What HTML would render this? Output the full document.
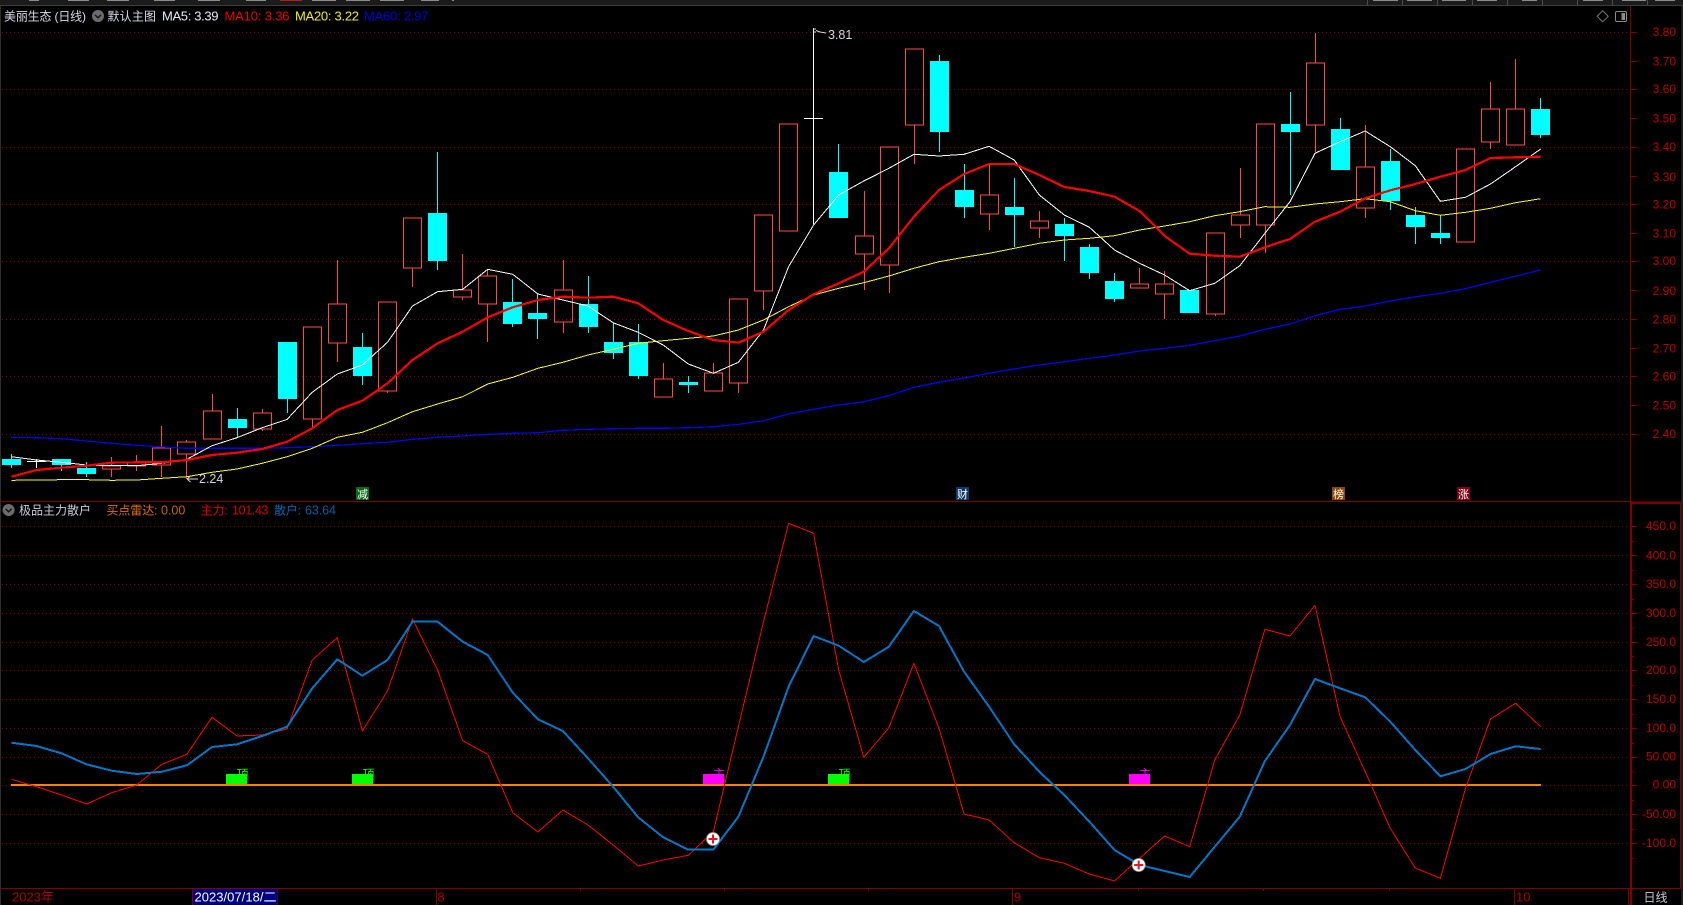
<!DOCTYPE html>
<html lang="zh">
<head>
<meta charset="utf-8">
<title>美丽生态 (日线)</title>
<style>
html,body{margin:0;padding:0;background:#000;width:1683px;height:905px;overflow:hidden}
svg{display:block;position:absolute;left:0;top:0}
text{font-family:"Liberation Sans","Noto Sans CJK SC",sans-serif}
polyline{shape-rendering:crispEdges;stroke-linejoin:round}
</style>
</head>
<body>
<svg width="1683" height="905" viewBox="0 0 1683 905" xmlns="http://www.w3.org/2000/svg">
<rect width="1683" height="905" fill="#000"/>
<!-- top strip -->
<rect x="0" y="0" width="1683" height="5" fill="#1b1b1b"/>
<rect x="0" y="5" width="1683" height="1" fill="#3c3c3c"/>
<g shape-rendering="crispEdges">
<g fill="#8c8c8c">
<rect x="29" y="0" width="10" height="1"/><rect x="68" y="0" width="21" height="1"/><rect x="107" y="0" width="22" height="1"/><rect x="154" y="0" width="21" height="1"/><rect x="198" y="0" width="22" height="1"/><rect x="246" y="0" width="20" height="1"/><rect x="312" y="0" width="24" height="1"/><rect x="346" y="0" width="24" height="1"/><rect x="380" y="0" width="24" height="1"/><rect x="421" y="0" width="18" height="1"/><rect x="452" y="0" width="2" height="1"/>
<rect x="1373" y="0" width="25" height="1"/><rect x="1407" y="0" width="25" height="1"/><rect x="1442" y="0" width="24" height="1"/><rect x="1477" y="0" width="20" height="1"/><rect x="1522" y="0" width="15" height="1"/><rect x="1583" y="0" width="20" height="1"/><rect x="1622" y="0" width="24" height="1"/><rect x="1655" y="0" width="20" height="1"/>
</g>
<rect x="280" y="0" width="22" height="1" fill="#b02020"/>
<g fill="#4a4a4a">
<rect x="1367" y="0" width="1" height="5"/><rect x="1402" y="0" width="1" height="5"/><rect x="1437" y="0" width="1" height="5"/><rect x="1472" y="0" width="1" height="5"/><rect x="1507" y="0" width="1" height="5"/><rect x="1542" y="0" width="1" height="5"/><rect x="1577" y="0" width="1" height="5"/><rect x="1612" y="0" width="1" height="5"/><rect x="1647" y="0" width="1" height="5"/>
</g>
<!-- frame -->
<rect x="0" y="6" width="1" height="899" fill="#2e2e2e"/>
<rect x="1681" y="6" width="2" height="899" fill="#1c1c1c"/>
</g>
<!-- grid lines -->
<g stroke="#8c0000" stroke-width="1" stroke-dasharray="1 3" shape-rendering="crispEdges" fill="none">
<path d="M2 32.5H1628M2 89.5H1628M2 147.5H1628M2 204.5H1628M2 261.5H1628M2 319.5H1628M2 376.5H1628M2 434.5H1628"/>
<path d="M2 526.5H1628M2 555.5H1628M2 584.5H1628M2 613.5H1628M2 642.5H1628M2 670.5H1628M2 699.5H1628M2 728.5H1628M2 757.5H1628M2 785.5H1628M2 814.5H1628M2 843.5H1628"/>
</g>
<!-- axes -->
<g stroke="#800000" fill="none" shape-rendering="crispEdges">
<path d="M1630.5 6V502" stroke-width="1"/>
<path d="M0 501.5H1631" stroke-width="1"/>
<path d="M1631 502.5H1681" stroke-width="2.5"/>
<path d="M1631 502V905" stroke-width="2"/>
<path d="M1680.5 502V888" stroke-width="1"/>
<path d="M1 888.5H1681" stroke-width="1"/>
<path d="M1631 32.5h6M1631 61.5h6M1631 89.5h6M1631 118.5h6M1631 147.5h6M1631 176.5h6M1631 204.5h6M1631 233.5h6M1631 261.5h6M1631 290.5h6M1631 319.5h6M1631 348.5h6M1631 376.5h6M1631 405.5h6M1631 434.5h6"/>
<path d="M1632 526.5h5M1632 555.5h5M1632 584.5h5M1632 613.5h5M1632 642.5h5M1632 670.5h5M1632 699.5h5M1632 728.5h5M1632 757.5h5M1632 785.5h5M1632 814.5h5M1632 843.5h5"/>
<path d="M1632 541.5h2M1632 570.5h2M1632 599.5h2M1632 628.5h2M1632 656.5h2M1632 685.5h2M1632 714.5h2M1632 743.5h2M1632 771.5h2M1632 800.5h2M1632 829.5h2M1632 858.5h2"/>
<path d="M436.5 888V905M1012.5 888V905M1514.5 888V905M1628.5 888V905M192.5 888V905M277.5 888V905"/>
<path d="M580.5 888v3M724.5 888v3M868.5 888v3M1138.5 888v3M1263.5 888v3M1389.5 888v3"/>
</g>
<!-- cyan candles -->
<g shape-rendering="crispEdges">
<path stroke="#00ffff" stroke-width="1" fill="none" d="M11.5 454V468M61.5 459V471M86.5 462V477M237.5 408V438M287.5 342V413M362.5 333V385M437.5 152V270M512.5 279V327M537.5 294V339M588.5 276V333M613.5 323V359M638.5 324V379M688.5 376V393M838.5 144V218M939.5 55V152M964.5 164V218M1014.5 178V247M1064.5 218V261M1089.5 244V279M1114.5 273V302M1290.5 92V195M1340.5 118V170M1390.5 149V210M1415.5 207V244M1440.5 215V244M1540.5 98V138"/>
<path fill="#00ffff" d="M2 459h19v6h-19zM52 459h19v6h-19zM77 468h19v6h-19zM228 419h19v9h-19zM278 342h19v57h-19zM353 347h19v29h-19zM428 213h19v48h-19zM503 302h19v22h-19zM528 313h19v6h-19zM579 304h19v23h-19zM604 342h19v11h-19zM629 342h19v34h-19zM679 382h19v3h-19zM829 172h19v46h-19zM930 61h19v71h-19zM955 190h19v17h-19zM1005 207h19v8h-19zM1055 224h19v12h-19zM1080 247h19v26h-19zM1105 281h19v18h-19zM1180 290h19v23h-19zM1281 124h19v8h-19zM1331 129h19v41h-19zM1381 161h19v40h-19zM1406 215h19v12h-19zM1431 233h19v5h-19zM1531 109h19v26h-19z"/>
<!-- white doji -->
<path stroke="#ffffff" stroke-width="1" fill="none" d="M36.5 459V468M27 461.5H46M813.5 28V224M804 118.5H823"/>
<!-- red candles -->
<path stroke="#ff4848" stroke-width="1" fill="none" d="M111.5 457V466M111.5 469V477M102.5 466h18v3h-18zM136.5 455V462M136.5 466V471M127.5 462h18v4h-18zM161.5 426V448M161.5 465V477M152.5 448h18v17h-18zM186.5 440V442M186.5 454V479M177.5 442h18v12h-18zM212.5 394V411M203.5 411h18v28h-18zM262.5 409V413M262.5 429V431M253.5 413h18v16h-18zM312.5 419V427M303.5 327h18v92h-18zM337.5 260V304M337.5 343V362M328.5 304h18v39h-18zM387.5 391V393M378.5 302h18v89h-18zM412.5 268V287M403.5 218h18v50h-18zM462.5 254V290M462.5 297V300M453.5 290h18v7h-18zM487.5 269V276M487.5 304V342M478.5 276h18v28h-18zM563.5 260V290M563.5 322V333M554.5 290h18v32h-18zM663.5 363V379M654.5 379h18v18h-18zM713.5 363V373M704.5 373h18v18h-18zM738.5 383V393M729.5 299h18v84h-18zM763.5 291V310M754.5 215h18v76h-18zM779.5 124h18v107h-18zM864.5 191V236M864.5 254V290M855.5 236h18v18h-18zM889.5 265V293M880.5 147h18v118h-18zM914.5 125V164M905.5 49h18v76h-18zM989.5 164V195M989.5 214V230M980.5 195h18v19h-18zM1039.5 211V221M1039.5 228V238M1030.5 221h18v7h-18zM1139.5 268V284M1130.5 284h18v4h-18zM1164.5 271V284M1164.5 294V319M1155.5 284h18v10h-18zM1215.5 314V316M1206.5 233h18v81h-18zM1240.5 168V215M1240.5 225V238M1231.5 215h18v10h-18zM1265.5 225V253M1256.5 124h18v101h-18zM1315.5 33V63M1315.5 125V152M1306.5 63h18v62h-18zM1365.5 125V167M1365.5 208V218M1356.5 167h18v41h-18zM1456.5 149h18v93h-18zM1490.5 82V109M1490.5 142V149M1481.5 109h18v33h-18zM1515.5 59V109M1506.5 109h18v36h-18z"/>
</g>
<!-- MA60 -->
<polyline fill="none" stroke="#0000ff" stroke-width="1.2" points="11.4,437.3 36.5,437.7 61.5,438.7 86.6,441 111.7,443.3 136.8,445.3 161.8,447 186.9,448.3 212,448.3 237,448.3 262.1,448.3 287.2,447.7 312.2,446.7 337.3,445.3 362.4,443.7 387.5,442.3 412.5,439.3 437.6,437.3 462.7,436 487.7,434.3 512.8,433.3 537.9,432.7 562.9,430.3 588,429.3 613.1,428.7 638.2,428.3 663.2,428.3 688.3,427.7 713.4,426.7 738.4,424.3 763.5,420.7 788.6,414 813.6,409.3 838.7,405 863.8,401.7 888.9,395.7 913.9,387.3 939,382.3 964.1,378 989.1,373.3 1014.2,369 1039.3,365 1064.3,361.7 1089.4,358.3 1114.5,355 1139.6,351 1164.6,348.3 1189.7,345.3 1214.8,340.7 1239.8,336 1264.9,329.3 1290,324 1315,315.7 1340.1,309.3 1365.2,306 1390.3,301 1415.3,296.7 1440.4,293.3 1465.5,288.7 1490.5,282.3 1515.6,276.3 1540.7,270"/>
<!-- MA20 -->
<polyline fill="none" stroke="#ffff00" stroke-width="1" points="11.4,480.3 36.5,480 61.5,479.7 86.6,479.7 111.7,480.3 136.8,480 161.8,478.3 186.9,476.7 212,472.3 237,469 262.1,463.3 287.2,456.7 312.2,448.3 337.3,437.3 362.4,432.3 387.5,422.7 412.5,411.7 437.6,404 462.7,396.7 487.7,384 512.8,377.3 537.9,368.3 562.9,362.3 588,355 613.1,349.3 638.2,343.3 663.2,340.7 688.3,338.3 713.4,336 738.4,330 763.5,320 788.6,306.7 813.6,295 838.7,288.3 863.8,282.7 888.9,276 913.9,268.3 939,261.7 964.1,257.3 989.1,253.3 1014.2,248.3 1039.3,243.3 1064.3,240 1089.4,238.3 1114.5,235.7 1139.6,230 1164.6,226 1189.7,221.7 1214.8,215.7 1239.8,211.7 1264.9,206.7 1290,207.3 1315,204 1340.1,201.7 1365.2,198.7 1390.3,201.7 1415.3,210.7 1440.4,215.3 1465.5,212.3 1490.5,208.3 1515.6,202.7 1540.7,198.7"/>
<!-- MA5 -->
<polyline fill="none" stroke="#ffffff" stroke-width="1" points="11.4,456.7 36.5,460 61.5,462.3 86.6,465 111.7,465.7 136.8,465.7 161.8,463.3 186.9,459.3 212,445.7 237,437.7 262.1,427.7 287.2,419.3 312.2,392.3 337.3,374 362.4,365 387.5,342.3 412.5,306 437.6,291.7 462.7,289.3 487.7,269.3 512.8,274.3 537.9,294 562.9,300 588,306 613.1,322.7 638.2,332.3 663.2,345 688.3,364 713.4,373.3 738.4,362.3 763.5,330 788.6,266.7 813.6,225 838.7,195 863.8,181 888.9,168.3 913.9,154.3 939,156 964.1,154.3 989.1,146.3 1014.2,160 1039.3,195 1064.3,215 1089.4,227.3 1114.5,250 1139.6,263.3 1164.6,275 1189.7,290.7 1214.8,283.3 1239.8,265.7 1264.9,233.3 1290,201.7 1315,153.3 1340.1,141.7 1365.2,131 1390.3,146.7 1415.3,165.7 1440.4,201.3 1465.5,197.3 1490.5,184 1515.6,166.7 1540.7,149"/>
<!-- MA10 -->
<polyline fill="none" stroke="#ff0000" stroke-width="2.2" points="11.4,476.7 36.5,470 61.5,467.7 86.6,465.7 111.7,462.7 136.8,462.3 161.8,462.3 186.9,460 212,455 237,452.7 262.1,449 287.2,441.7 312.2,428.3 337.3,410 362.4,400.7 387.5,383.3 412.5,360 437.6,343.3 462.7,331.7 487.7,317.3 512.8,307.3 537.9,300 562.9,296.7 588,297.7 613.1,296.7 638.2,303.3 663.2,320 688.3,331 713.4,340 738.4,342.7 763.5,331.7 788.6,310 813.6,294.3 838.7,283.3 863.8,271.7 888.9,248.3 913.9,216.7 939,190 964.1,174 989.1,164 1014.2,164 1039.3,175 1064.3,187 1089.4,191 1114.5,196.7 1139.6,211 1164.6,236 1189.7,253.7 1214.8,255.7 1239.8,256.7 1264.9,247.3 1290,239 1315,221.7 1340.1,211.7 1365.2,198.3 1390.3,190.3 1415.3,184 1440.4,176.7 1465.5,170 1490.5,158 1515.6,157.3 1540.7,156.7"/>
<!-- annotations -->
<g fill="none" stroke="#d8d8d8" stroke-width="1">
<path d="M813 29h3M813 32h3M816 30.5L820 32 826 33"/>
<path d="M187 479h11M187 479l3.5-3M187 479l3.5 3"/>
</g>
<text x="828" y="39" font-size="12.5" fill="#cfd8e0">3.81</text>
<text x="199" y="483" font-size="12.5" fill="#cfd8e0">2.24</text>
<!-- tags -->
<g font-size="11" fill="#ffffff" text-anchor="middle">
<rect x="356" y="487" width="13" height="13" fill="#0a6a14"/><text x="362.5" y="498">减</text>
<rect x="956" y="487" width="13" height="13" fill="#0a3a6a"/><text x="962.5" y="498">财</text>
<rect x="1332" y="487" width="13" height="13" fill="#8a4a00"/><text x="1338.5" y="498">榜</text>
<rect x="1457" y="487" width="13" height="13" fill="#800010"/><text x="1463.5" y="498">涨</text>
</g>
<!-- lower panel bars -->
<g shape-rendering="crispEdges">
<rect x="226" y="774" width="21" height="10" fill="#00ff00"/>
<rect x="352" y="774" width="21" height="10" fill="#00ff00"/>
<rect x="828" y="774" width="21" height="10" fill="#00ff00"/>
<rect x="703" y="774" width="21" height="12" fill="#ff00ff"/>
<rect x="1129" y="774" width="21" height="12" fill="#ff00ff"/>
</g>
<g font-size="12">
<text x="236.5" y="778.5" fill="#00ff00">顶</text>
<text x="362.5" y="778.5" fill="#00ff00">顶</text>
<text x="838.5" y="778.5" fill="#00ff00">顶</text>
<text x="713" y="778" fill="#ff00ff">主</text>
<text x="1139" y="778" fill="#ff00ff">主</text>
</g>
<rect x="11" y="784" width="1530" height="2" fill="#ff8000" shape-rendering="crispEdges"/>
<!-- 主力 red line -->
<polyline fill="none" stroke="#ff0000" stroke-width="1" points="11.4,779.3 36.5,786.7 61.5,795 86.6,804 111.7,792.7 136.8,785 161.8,764.3 186.9,754.3 212,717.3 237,736 262.1,735 287.2,729 312.2,660 337.3,637.7 362.4,731 387.5,691 412.5,619 437.6,670 462.7,740.7 487.7,754.3 512.8,812.7 537.9,832 562.9,810 588,825 613.1,845 638.2,866 663.2,860 688.3,855.3 713.4,831.7 738.4,726.7 763.5,621.7 788.6,523.3 813.6,533.3 838.7,670 863.8,757.3 888.9,727.7 913.9,663.3 939,728.3 964.1,814 989.1,820 1014.2,842.7 1039.3,857.7 1064.3,863.3 1089.4,874 1114.5,881 1139.6,858.3 1164.6,836 1189.7,846.7 1214.8,760 1239.8,715 1264.9,629.3 1290,636 1315,605.3 1340.1,716.7 1365.2,771.7 1390.3,828.3 1415.3,868 1440.4,878.3 1465.5,788.3 1490.5,719 1515.6,703.3 1540.7,726.7"/>
<!-- 散户 blue line -->
<polyline fill="none" stroke="#0078c8" stroke-width="2" points="11.4,742.7 36.5,746 61.5,753.3 86.6,764.3 111.7,770.7 136.8,774 161.8,771.7 186.9,765.3 212,747 237,744.3 262.1,736 287.2,726.7 312.2,688.3 337.3,659.3 362.4,675.7 387.5,660 412.5,621.7 437.6,621.7 462.7,641.7 487.7,655 512.8,692.7 537.9,719.3 562.9,731 588,758.3 613.1,786.7 638.2,817.3 663.2,837.3 688.3,849.7 713.4,849.7 738.4,816.7 763.5,756.7 788.6,686.7 813.6,636 838.7,645.7 863.8,662 888.9,646.7 913.9,611 939,626 964.1,671.7 989.1,706.7 1014.2,744.3 1039.3,771.7 1064.3,795 1089.4,821.7 1114.5,850 1139.6,865 1164.6,871 1189.7,877 1214.8,846.7 1239.8,816.7 1264.9,761 1290,725 1315,679 1340.1,688.3 1365.2,697.3 1390.3,721.7 1415.3,750 1440.4,776.3 1465.5,769 1490.5,754 1515.6,746.3 1540.7,749"/>
<!-- plus markers -->
<g>
<circle cx="713" cy="839" r="6.5" fill="#ffffff" stroke="#9a9a9a" stroke-width="0.8"/>
<path d="M708.5 839h9M713 834.5v9" stroke="#f01020" stroke-width="2" fill="none"/>
<circle cx="1138.7" cy="865" r="6.5" fill="#ffffff" stroke="#9a9a9a" stroke-width="0.8"/>
<path d="M1134.2 865h9M1138.7 860.5v9" stroke="#f01020" stroke-width="2" fill="none"/>
</g>
<!-- axis labels upper -->
<g font-size="12" fill="#c00000" text-anchor="end">
<text x="1676" y="36">3.80</text><text x="1676" y="65.5">3.70</text><text x="1676" y="93">3.60</text><text x="1676" y="122.5">3.50</text><text x="1676" y="151">3.40</text><text x="1676" y="181">3.30</text><text x="1676" y="208.5">3.20</text><text x="1676" y="237.5">3.10</text><text x="1676" y="265">3.00</text><text x="1676" y="295">2.90</text><text x="1676" y="323.5">2.80</text><text x="1676" y="352.5">2.70</text><text x="1676" y="380.5">2.60</text><text x="1676" y="409.5">2.50</text><text x="1676" y="438">2.40</text>
<text x="1676" y="530">450.0</text><text x="1676" y="559.5">400.0</text><text x="1676" y="588">350.0</text><text x="1676" y="617">300.0</text><text x="1676" y="646">250.0</text><text x="1676" y="674">200.0</text><text x="1676" y="703">150.0</text><text x="1676" y="732">100.0</text><text x="1676" y="760.5">50.00</text><text x="1676" y="788.5">0.00</text><text x="1676" y="818">-50.00</text><text x="1676" y="847">-100.0</text>
</g>
<!-- title row -->
<text x="4" y="20.5" font-size="12" fill="#d4dbe8" textLength="82">美丽生态 (日线)</text>
<circle cx="98" cy="16" r="6" fill="#6c6c6c"/>
<path d="M95 14.8l3 3 3-3" fill="none" stroke="#1a1a1a" stroke-width="1.5"/>
<text x="107.5" y="20.5" font-size="12" fill="#d4dbe8" textLength="48.5">默认主图</text>
<text x="162" y="20.5" font-size="13" fill="#e6eaf2" textLength="56.5">MA5: 3.39</text>
<text x="224.5" y="20.5" font-size="13" fill="#f00000" textLength="65">MA10: 3.36</text>
<text x="295" y="20.5" font-size="13" fill="#f0f000" textLength="64">MA20: 3.22</text>
<text x="364" y="20.5" font-size="13" fill="#0000e0" textLength="64.5">MA60: 2.97</text>
<!-- top right icons -->
<path d="M1602.7 10.8l5.5 5.5-5.5 5.5-5.5-5.5z" fill="none" stroke="#777" stroke-width="1"/>
<rect x="1615.5" y="11.5" width="11" height="10" rx="1.5" fill="none" stroke="#8a8a8a" stroke-width="1"/>
<rect x="1621.5" y="13" width="3.5" height="7" fill="#8a8a8a"/>
<!-- lower title -->
<circle cx="8.6" cy="510" r="6" fill="#6c6c6c"/>
<path d="M5.6 508.8l3 3 3-3" fill="none" stroke="#1a1a1a" stroke-width="1.5"/>
<text x="19" y="514.5" font-size="12" fill="#c4cedc" textLength="72">极品主力散户</text>
<text x="106.5" y="514.5" font-size="12" fill="#e07000" textLength="51">买点雷达:</text>
<text x="161" y="514.5" font-size="12.5" fill="#c86800">0.00</text>
<text x="200.7" y="514.5" font-size="12" fill="#f00000" textLength="27">主力:</text>
<text x="232" y="514.5" font-size="12.5" fill="#d80000" textLength="36.5">101.43</text>
<text x="274" y="514.5" font-size="12" fill="#0068b8" textLength="27">散户:</text>
<text x="305" y="514.5" font-size="12.5" fill="#0060a8" textLength="31">63.64</text>
<!-- bottom axis -->
<rect x="193" y="889" width="84.5" height="16" fill="#000080"/>
<text x="194.5" y="901.5" font-size="13" fill="#ffffff" textLength="82">2023/07/18/二</text>
<text x="12" y="901.5" font-size="13" fill="#b00000">2023年</text>
<text x="437.5" y="901.5" font-size="13" fill="#b00000">8</text>
<text x="1014" y="901.5" font-size="13" fill="#b00000">9</text>
<text x="1516" y="901.5" font-size="13" fill="#b00000">10</text>
<text x="1643.5" y="901.5" font-size="12" fill="#c8ccd4">日线</text>
</svg>
</body>
</html>
